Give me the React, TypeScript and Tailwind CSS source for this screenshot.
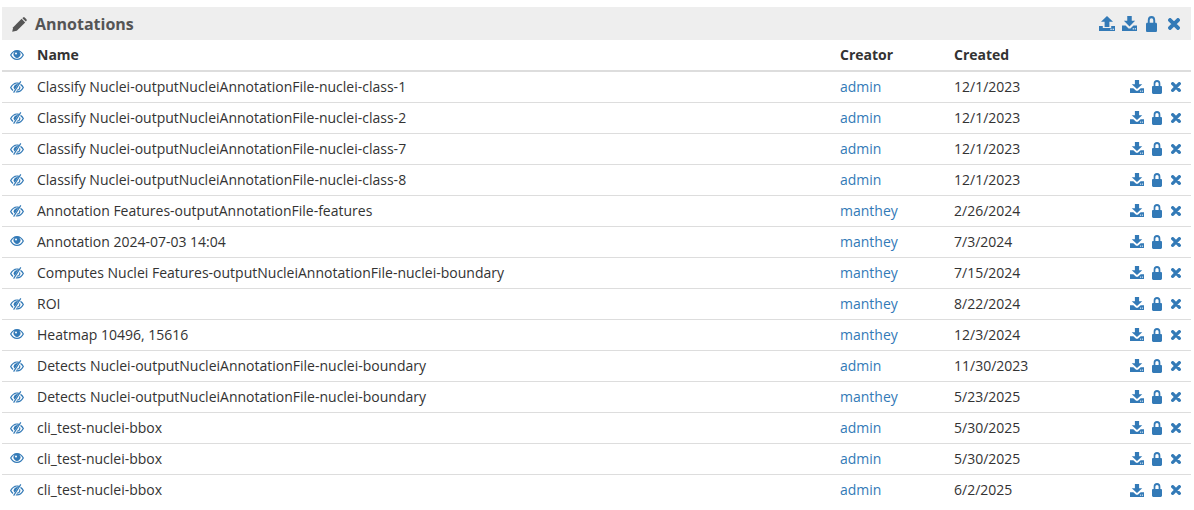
import React from "react";

const Download = ({ w = 14, h = 13 }: { w?: number; h?: number }) => (
  <svg width={w} height={h} viewBox="0 0 16 15" fill="currentColor" preserveAspectRatio="none">
    <path d="M5.600 0h4.800v4.800H14L8 10.500 2 4.800h3.600z" />
    <path d="M0 9.500h3.800L7 12.500h2L12.200 9.500H16V15H0z" />
    <rect x="11.400" y="12.300" width="1.300" height="1.100" fill="#fff" />
    <rect x="13.600" y="12.300" width="1.300" height="1.100" fill="#fff" />
  </svg>
);
const Upload = ({ w = 16, h = 15 }: { w?: number; h?: number }) => (
  <svg width={w} height={h} viewBox="0 0 16 15" fill="currentColor" preserveAspectRatio="none">
    <path d="M8 0l6 5.700h-3.600v5.300H5.600V5.700H2z" />
    <path d="M0 10h3.800v2h8.400v-2H16v5H0z" />
    <rect x="11.400" y="12.700" width="1.300" height="1.100" fill="#fff" />
    <rect x="13.600" y="12.700" width="1.300" height="1.100" fill="#fff" />
  </svg>
);
const Lock = ({ w = 10, h = 14 }: { w?: number; h?: number }) => (
  <svg width={w} height={h} viewBox="0 0 11 14" fill="currentColor" preserveAspectRatio="none">
    <path fillRule="evenodd" d="M1.800 6V3.800a3.700 3.700 0 0 1 7.400 0V6h.6c.7 0 1.200.5 1.200 1.200v5.400c0 .8-.6 1.400-1.400 1.400H1.400C.6 14 0 13.400 0 12.600V7.200C0 6.500.5 6 1.200 6zm1.900 0h3.600V3.800a1.800 1.800 0 0 0-3.600 0z" />
  </svg>
);
const Close = ({ s = 10 }: { s?: number }) => (
  <svg width={s} height={s} viewBox="0 0 10 10" fill="none" stroke="currentColor" strokeWidth="3.300" strokeLinecap="round">
    <path d="M1.700 1.700l6.600 6.600M8.300 1.700l-6.600 6.600" />
  </svg>
);
const Eye = () => (
  <svg width="14" height="10" viewBox="0 0 14 10" fill="currentColor">
    <path fillRule="evenodd" d="M7 0c3 0 5.500 2 7 5-1.500 3-4 5-7 5S1.500 8 0 5c1.500-3 4-5 7-5zM1.400 5C2.600 7.200 4.500 8.800 7 8.800s4.400-1.600 5.600-3.800C11.800 3.500 10.700 2.400 9.300 1.800a3.400 3.400 0 1 1-4.600 0C3.300 2.400 2.200 3.500 1.400 5z" />
    <circle cx="6" cy="3.600" r="1" fill="#fff" />
  </svg>
);
const EyeOff = () => (
  <svg width="14" height="12" viewBox="0 0 14 12" fill="currentColor">
    <path fillRule="evenodd" d="M7 1.500c.8 0 1.500.1 2.200.4L8.500 3A3.400 3.400 0 0 0 4.700 3.300C3.300 3.900 2.200 5 1.400 6.500c.5 1 1.200 1.800 2 2.400l-.7 1C1.600 9.200.7 8 0 6.500c1.500-3 4-5 7-5zM10.800 2.800c1.300.9 2.400 2.100 3.200 3.700-1.500 3-4 5-7 5-.5 0-1-.1-1.500-.2l.8-1.100c.2 0 .5.100.7.100 2.500 0 4.400-1.600 5.600-3.800-.6-1-1.400-1.900-2.400-2.600z" />
    <path d="M10.300 0l1 .7L4.100 12l-1-.7z" fill="currentColor" />
    <path d="M8.200 3L4.800 8.600A3.400 3.400 0 0 1 3.600 6.500C3.600 4.500 6 2.700 8.200 3z" />
    <path d="M9.600 4.800c.5.500.8 1.100.8 1.700a3.400 3.400 0 0 1-3.900 3.300l.8-1.200c.9-.1 1.500-.6 1.700-1.400z" />
  </svg>
);

const rows: [string, string, string, boolean][] = [
  ["Classify Nuclei-outputNucleiAnnotationFile-nuclei-class-1", "admin", "12/1/2023", false],
  ["Classify Nuclei-outputNucleiAnnotationFile-nuclei-class-2", "admin", "12/1/2023", false],
  ["Classify Nuclei-outputNucleiAnnotationFile-nuclei-class-7", "admin", "12/1/2023", false],
  ["Classify Nuclei-outputNucleiAnnotationFile-nuclei-class-8", "admin", "12/1/2023", false],
  ["Annotation Features-outputAnnotationFile-features", "manthey", "2/26/2024", false],
  ["Annotation 2024-07-03 14:04", "manthey", "7/3/2024", true],
  ["Computes Nuclei Features-outputNucleiAnnotationFile-nuclei-boundary", "manthey", "7/15/2024", false],
  ["ROI", "manthey", "8/22/2024", false],
  ["Heatmap 10496, 15616", "manthey", "12/3/2024", true],
  ["Detects Nuclei-outputNucleiAnnotationFile-nuclei-boundary", "admin", "11/30/2023", false],
  ["Detects Nuclei-outputNucleiAnnotationFile-nuclei-boundary", "manthey", "5/23/2025", false],
  ["cli_test-nuclei-bbox", "admin", "5/30/2025", false],
  ["cli_test-nuclei-bbox", "admin", "5/30/2025", true],
  ["cli_test-nuclei-bbox", "admin", "6/2/2025", false],
];

export default function App() {
  return (
    <div className="h-[510px] overflow-hidden bg-white pt-[7px] pl-[2px] pr-[3px] font-['Open_Sans',sans-serif] text-[14px] text-[#333]">
      <div className="flex h-[33px] items-center bg-[#eeeeee] pl-[10px] pr-[11px]">
        <svg width="15" height="15" viewBox="0 0 15 15" fill="#555" className="mr-[8px] mt-[1px]">
          <path d="M9.600 1.800L13.200 5.400 4.800 13.800 0.200 14.800 1.200 10.200z" />
          <path d="M11 .6c.5-.5 1.200-.5 1.700 0l1.700 1.700c.5.500.5 1.200 0 1.700l-.6.600L10.400 1.200z" />
        </svg>
        <span className="text-[16px] font-bold text-[#555]">Annotations</span>
        <div className="ml-auto flex items-center text-[#337ab7]">
          <Upload />
          <span className="ml-[7px]"><Download w={15} h={15} /></span>
          <span className="ml-[9px]"><Lock w={11} h={16} /></span>
          <span className="ml-[11px]"><Close s={12} /></span>
        </div>
      </div>
      <div className="flex h-[32px] items-center border-b-2 border-[#dddddd] pb-[1px] font-bold">
        <div className="flex w-[35px] shrink-0 pl-[8px] text-[#337ab7]"><Eye /></div>
        <div className="w-[803px] shrink-0">Name</div>
        <div className="w-[114px] shrink-0">Creator</div>
        <div>Created</div>
      </div>
      {rows.map((r, i) => (
        <div key={i} className={`flex h-[31px] items-center pb-[2px] ${i < rows.length - 1 ? "border-b border-[#dddddd]" : ""}`}>
          <div className={`flex w-[35px] shrink-0 pl-[8px] text-[#337ab7] ${r[3] ? "" : "mt-[1px]"}`}>{r[3] ? <Eye /> : <EyeOff />}</div>
          <div className="w-[803px] shrink-0">{r[0]}</div>
          <div className="w-[114px] shrink-0 text-[#337ab7]">{r[1]}</div>
          <div>{r[2]}</div>
          <div className="ml-auto mt-[1px] flex items-center pr-[10px] text-[#337ab7]">
            <Download />
            <span className="ml-[8px]"><Lock /></span>
            <span className="ml-[9px]"><Close /></span>
          </div>
        </div>
      ))}
    </div>
  );
}
